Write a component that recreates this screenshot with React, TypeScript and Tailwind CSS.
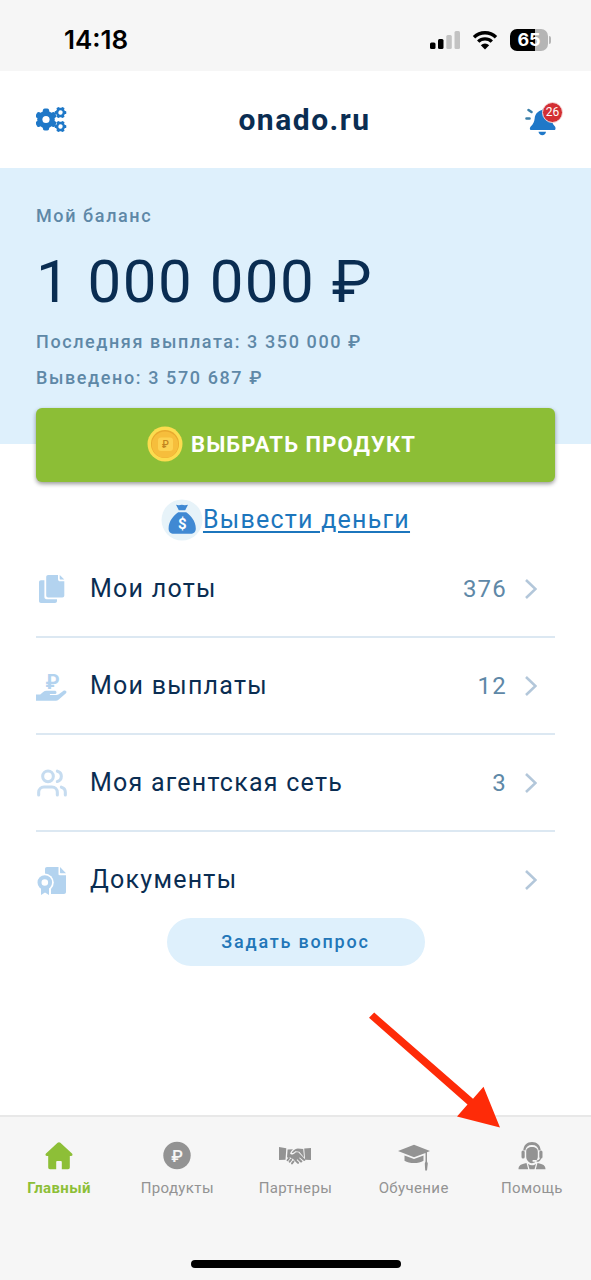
import React from 'react';
import { Users } from 'lucide-react';
import clsx from 'clsx';

const gearAngles = [0, 60, 120, 180, 240, 300];

const Gear = ({ x, y, r, hole, tilt = 0 }: { x: number; y: number; r: number; hole: number; tilt?: number }) => (
  <g transform={`translate(${x} ${y}) rotate(${tilt})`}>
    {gearAngles.map((angle) => (
      <rect key={angle} x={-r * 0.28} y={-r} width={r * 0.56} height={r} rx={r * 0.16} transform={`rotate(${angle})`} fill="#1f78c8" />
    ))}
    <circle r={r * 0.8} fill="#1f78c8" />
    <circle r={hole} fill="#fff" />
  </g>
);

const SettingsIcon = () => (
  <svg className="h-8 w-8" viewBox="0 0 32 32">
    <Gear x={10} y={15.5} r={11} hole={3.6} />
    <Gear x={24.5} y={8.5} r={5.8} hole={2.2} tilt={30} />
    <Gear x={24.5} y={22.5} r={5.8} hole={2.2} tilt={30} />
  </svg>
);

const BellIcon = () => (
  <svg className="h-9 w-[38px]" viewBox="0 0 38 36">
    <path d="M17 8c1-.7 1.8-1.8 2.2-2.6.6 1 1.6 2 2.6 2.8 3.200 1.600 4.400 4.200 4.700 7.800.2 3.500.8 5.500 3.500 8.500.8 1 .7 3-.2 3.500H5.500c-1-.5-.8-2.300.2-3.400 2.600-2.700 3.600-4.600 4-8.400.4-3.900 2.700-6.900 7.300-8.200z" fill="#1f78c8" />
    <path d="M13.500 29.800h7.500c-.3 2.200-1.800 3.400-3.700 3.400s-3.400-1.200-3.800-3.400z" fill="#1f78c8" />
    <path d="M1.500 16.500h3M3.500 8l3 2" stroke="#3b7fa8" strokeWidth="2.600" strokeLinecap="round" />
  </svg>
);

const SignalIcon = () => (
  <svg className="h-5 w-[30px]" viewBox="0 0 30 20">
    <rect x="0" y="12.500" width="5.500" height="6.500" rx="1.500" />
    <rect x="8" y="9" width="5.500" height="10" rx="1.500" />
    <rect x="16.300" y="5" width="5.500" height="14" rx="1.500" fill="#c3c3c3" />
    <rect x="24.500" y="1" width="5.500" height="18" rx="1.500" fill="#c3c3c3" />
  </svg>
);

const WifiIcon = () => (
  <svg className="h-5 w-[26px]" viewBox="0 0 26 20">
    <path d="M2 7.200a15.800 15.800 0 0 1 22 0M6.200 11.600a9.800 9.800 0 0 1 13.600 0" fill="none" stroke="#000" strokeWidth="3.400" />
    <path d="M8.800 15.200a6 6 0 0 1 8.400 0L13 19.500z" />
  </svg>
);

const CoinIcon = () => (
  <svg className="h-9 w-9" viewBox="0 0 36 36">
    <circle cx="18" cy="18" r="17.500" fill="#fcdc4f" />
    <circle cx="18" cy="18" r="14" fill="#e9a92e" />
    <circle cx="18" cy="18.600" r="13.200" fill="#f6be3c" />
    <rect x="11" y="11.500" width="15" height="13.500" rx="3" fill="#fcd252" />
    <text x="18.500" y="22" textAnchor="middle" fontSize="10" fontWeight="500" fill="#c1841f" letterSpacing="0">₽</text>
  </svg>
);

const MoneyBagIcon = () => (
  <svg className="h-[42px] w-[42px]" viewBox="0 0 42 42">
    <circle cx="21" cy="21" r="20.500" fill="#e7f3f9" />
    <path d="M15 5.800c2 .6 3.500.6 5.800 0 2.300.6 4 .6 6.200 0l-2.800 5.400h-6.400z" fill="#4089d3" />
    <path d="M17.200 13.200h8c4.300 3.200 9.600 8.600 9.600 16.300 0 3.400-2 5.300-5.400 5.300H13c-3.400 0-5.400-1.900-5.400-5.300 0-7.700 5.300-13.100 9.600-16.300z" fill="#4089d3" />
    <text x="21.200" y="29.500" textAnchor="middle" fontSize="15" fontWeight="700" fill="#fff" letterSpacing="0">$</text>
  </svg>
);

const LotsIcon = () => (
  <svg className="h-8 w-8" viewBox="0 0 32 32" fill="#b3d3ef">
    <path d="M3 9.200C3 8 3.800 7.200 5 7.200h3.400V24c0 1.400.8 2.200 2.200 2.200H21V28c0 1.200-.8 2-2 2H5c-1.200 0-2-.8-2-2z" />
    <path d="M10.200 4c0-1.200.8-2 2-2H22v4c0 1.500.8 2.300 2.300 2.300h4V22.500c0 1.200-.8 2-2 2H12.200c-1.200 0-2-.8-2-2z" />
    <path d="M23.700 2l4.600 4.600h-3.600c-.7 0-1-.3-1-1z" />
  </svg>
);

const PayoutsIcon = () => (
  <svg className="h-8 w-8" viewBox="0 0 32 32" fill="#b3d3ef">
    <text x="16.500" y="19" textAnchor="middle" fontSize="20" fontWeight="700" letterSpacing="0">₽</text>
    <path d="M0 24.400h4.200l3-2.400c1-.8 2-1.200 3.300-1.200h8c1.200 0 2 .7 2 1.600s-.8 1.700-2 1.700h-4.600v1h6.400c1 0 1.800-.3 2.500-.8l4.400-3.400c1-.7 2.200-.6 2.900.2.6.8.4 1.800-.4 2.500l-7.200 6.200c-.8.600-1.600.9-2.600.9H0z" />
  </svg>
);

const DocsIcon = () => (
  <svg className="h-8 w-8" viewBox="0 0 32 32" fill="#b3d3ef">
    <path d="M9 5c0-1.200.8-2 2-2h11.500v7c0 .8.400 1.200 1.200 1.200H30V28c0 1.200-.8 2-2 2H9z" />
    <path d="M24 3l6 6.200h-5c-.7 0-1-.3-1-1z" />
    <circle cx="8.800" cy="18.500" r="9" fill="#fff" />
    <path d="M3 23h12v8H3z" fill="#fff" />
    <path d="M5 23.500h8v7.500l-4-2.600L5 31z" />
    <circle cx="8.800" cy="18.500" r="5.300" fill="#fff" stroke="#b3d3ef" strokeWidth="4" />
  </svg>
);

const HomeIcon = () => (
  <svg className="h-8 w-8" viewBox="0 0 32 32" fill="currentColor">
    <path d="M14.600 2.800c.8-.8 2-.8 2.800 0L29 13.500c1 1 .5 2.500-1 2.500h-1.200v11.300c0 1.200-.6 1.900-1.800 1.900h-6.200v-7c0-.8-.4-1.200-1.200-1.200h-3.200c-.8 0-1.200.4-1.200 1.200v7H7c-1.200 0-1.800-.7-1.800-1.900V16H4c-1.500 0-2-1.500-1-2.500z" />
  </svg>
);

const ProductsIcon = () => (
  <svg className="h-8 w-8" viewBox="0 0 32 32" fill="currentColor">
    <circle cx="16" cy="15.500" r="13.700" />
    <text x="16" y="21.500" textAnchor="middle" fontSize="17" fontWeight="500" fill="#f6f6f6" letterSpacing="0">₽</text>
  </svg>
);

const PartnersIcon = () => (
  <svg className="h-8 w-8" viewBox="0 0 32 32" fill="currentColor">
    <path d="M0 7l7.300 1.200-.8 11.600L0 20zM32 8l-6.800.6.900 11.200 5.900.2z" />
    <path d="M8.600 9.500l5.400-.3c-1.300 1.300-2.600 2.800-2.900 4.300.6 1.500 3.200 1.400 5.800-1.300l2.400.1 7 7.200c.5 1.200-.9 2-2 1.100l-3.600-3.200-.6.600 3.200 3.100c.4 1.200-.9 2-2 1.100l-3-2.900-.7.600 2.500 2.600c.2 1.200-1 1.600-1.900.9l-3-3.100c-.5-1.500-1.900-1.900-2.700-1.500-.5-1.300-2-1.500-2.800-.8L8 17.300z" />
    <path d="M12.700 13c1.100-2.500 3.300-4.300 6-4.500l5.500.5.900 8.600-4.800-5.900-4-.4c-1.100 1.300-2.400 1.900-3.600 1.700z" />
    <path d="M10 18.300l-1.500 2M12.200 19.700l-1.600 2M14.500 21.400l-1.500 2" stroke="currentColor" strokeWidth="1.900" strokeLinecap="round" />
  </svg>
);

const EducationIcon = () => (
  <svg className="h-8 w-8" viewBox="0 0 32 32" fill="currentColor">
    <path d="M16 4.800l16 6.200-3 1.200v9.300l.8 2-.8 7h-1.800l-.4-7 .7-2v-8.600L16 17.200 0 11z" />
    <path d="M6.500 15.500L16 19l9.500-3.500v5.200c-4.700 3.200-14.300 3.200-19 0z" />
  </svg>
);

const SupportIcon = () => (
  <svg className="h-8 w-8" viewBox="0 0 32 32" fill="currentColor">
    <path d="M7.300 10.300C7.700 5 11 2 16 2s8.300 3 8.700 8.300l-2 .3C22.200 6.900 20 5 16 5s-6.200 1.900-6.700 5.600z" />
    <rect x="5.500" y="10.500" width="3.200" height="8" rx="1.500" />
    <rect x="23.300" y="10.500" width="3.200" height="8" rx="1.500" />
    <path d="M10.200 11.500c0-3 2.300-4.500 5.800-4.500s5.800 1.500 5.800 4.500v5.200c0 1.300-.5 2.500-1.200 3.400h-4v1.600h2.800c-2.300 2-4.500 1.800-6.600.2-1.700-1.300-2.600-3.200-2.600-5.200z" />
    <path d="M24.600 18c-.5 2.200-1.800 3.200-4 3.200" fill="none" stroke="currentColor" strokeWidth="1.200" />
    <path d="M2.500 29.200c0-3.600 2.400-5.200 8-6.200l1.700 6.200zM29.500 29.200c0-3.600-2.400-5.200-8-6.200l-1.700 6.200z" />
    <path d="M12 23.800c2.500 2 5.500 2 8 0l-1.500 5.400h-5z" />
  </svg>
);

const menu = [
  { label: 'Мои лоты', value: '376', icon: <LotsIcon /> },
  { label: 'Мои выплаты', value: '12', icon: <PayoutsIcon /> },
  { label: 'Моя агентская сеть', value: '3', icon: <Users className="h-8 w-8 text-[#c6dcf0]" strokeWidth={2.3} /> },
  { label: 'Документы', value: '', icon: <DocsIcon /> },
];

const tabs = [
  { label: 'Главный', icon: <HomeIcon />, active: true },
  { label: 'Продукты', icon: <ProductsIcon /> },
  { label: 'Партнеры', icon: <PartnersIcon /> },
  { label: 'Обучение', icon: <EducationIcon /> },
  { label: 'Помощь', icon: <SupportIcon /> },
];

const StatusBar: React.FC = () => (
  <div className="flex h-[71px] items-center justify-between bg-[#f6f6f6] pl-16 pr-10 pt-2 text-black">
    <span className="font-[Inter] text-[26px] font-semibold">14:18</span>
    <div className="flex items-center gap-3">
      <SignalIcon />
      <WifiIcon />
      <div className="flex items-center gap-px">
        <div className="flex h-[22px] w-[38px] items-center justify-center rounded-[7px] bg-linear-to-r from-black from-65% to-[#b5b5b5] to-65% font-[Inter] text-lg font-bold text-white">
          65
        </div>
        <div className="h-2 w-[2px] rounded-r-full bg-[#b5b5b5]" />
      </div>
    </div>
  </div>
);

const TabBar: React.FC = () => (
  <nav className="relative mt-auto border-t-2 border-[#e8e8e8] bg-[#f6f6f6] pb-3 pt-[23px]">
    {/* Pointer to the help tab */}
    <svg className="pointer-events-none absolute -top-[105px] right-[91px] h-[116px] w-[131px]" viewBox="0 0 131 116" fill="#fe2b08">
      <path d="M5.200.6L104 86.700l10.500-12L131 115.500 88 104.500l10.500-12L0 5.800z" />
    </svg>
    <div className="grid grid-cols-5">
      {tabs.map((tab) => (
        <a
          key={tab.label}
          href="#"
          className={clsx(
            'flex flex-col items-center gap-1.5 text-[15px] leading-5 tracking-wide',
            tab.active ? 'font-bold text-[#8dbf37]' : 'text-[#939393]'
          )}
        >
          {tab.icon}
          {tab.label}
        </a>
      ))}
    </div>
    <div className="mx-auto mt-[62px] h-2 w-[210px] rounded-full bg-black" />
  </nav>
);

const App: React.FC = () => {
  return (
    <div className="flex min-h-screen flex-col bg-white font-[Roboto,sans-serif] text-[#0a2d52]">
      <StatusBar />

      <header className="flex h-[97px] items-center justify-between pl-9 pr-7">
        <button type="button" aria-label="Настройки">
          <SettingsIcon />
        </button>
        <h1 className="pl-4 text-3xl font-bold tracking-wider">onado.ru</h1>
        <button type="button" aria-label="Уведомления" className="relative">
          <BellIcon />
          <span className="absolute top-0 right-0 flex h-[21px] w-[21px] items-center justify-center rounded-full border border-[#f6dede] bg-[#d32f33] text-xs text-white">
            26
          </span>
        </button>
      </header>

      <section className="h-[276px] bg-[#def0fc] px-9 pt-9 tracking-widest">
        <p className="text-lg leading-6 font-medium text-[#5e88a7]">Мой баланс</p>
        <p className="mt-[14px] text-6xl leading-[80px] tracking-wide">1 000 000 ₽</p>
        <p className="mt-2 text-lg leading-6 font-medium text-[#5e88a7]">Последняя выплата: 3 350 000 ₽</p>
        <p className="mt-3 text-lg leading-6 font-medium text-[#5e88a7]">Выведено: 3 570 687 ₽</p>
      </section>

      <main className="flex flex-col px-9">
        <button
          type="button"
          className="-mt-9 flex h-[74px] items-center justify-center gap-2 rounded-md bg-[#8cbe36] pb-0.5 pr-7 text-[22px] font-bold tracking-wider text-white shadow-[0_2px_4px_rgba(0,0,0,0.4)]"
        >
          <CoinIcon />
          ВЫБРАТЬ ПРОДУКТ
        </button>
        <a href="#" className="mt-[17px] flex items-center justify-center pr-5 text-[25px] tracking-wider text-[#1c76bd]">
          <MoneyBagIcon />
          <span className="underline decoration-2 underline-offset-3">Вывести деньги</span>
        </a>

        <ul>
          {menu.map((item) => (
            <li key={item.label} className="border-b-2 border-[#dce8f2] last:border-b-0">
              <a href="#" className="flex h-[95px] items-center gap-[22px] pr-[18px] text-[25px] tracking-wider">
                {item.icon}
                <span className="flex-1">{item.label}</span>
                <span className="text-2xl tracking-wider text-[#5e88a7]">{item.value}</span>
                <svg className="-ml-1 h-5 w-3" viewBox="0 0 12 20" fill="none" stroke="#b3c7da" strokeWidth="2.600">
                  <path d="M1 1l9.500 9L1 19" />
                </svg>
              </a>
            </li>
          ))}
        </ul>

        <button type="button" className="-mt-[9px] h-12 w-[258px] self-center rounded-full bg-[#def0fc] text-lg font-medium tracking-widest text-[#2276b8]">
          Задать вопрос
        </button>
      </main>

      <TabBar />
    </div>
  );
};

export default App;
